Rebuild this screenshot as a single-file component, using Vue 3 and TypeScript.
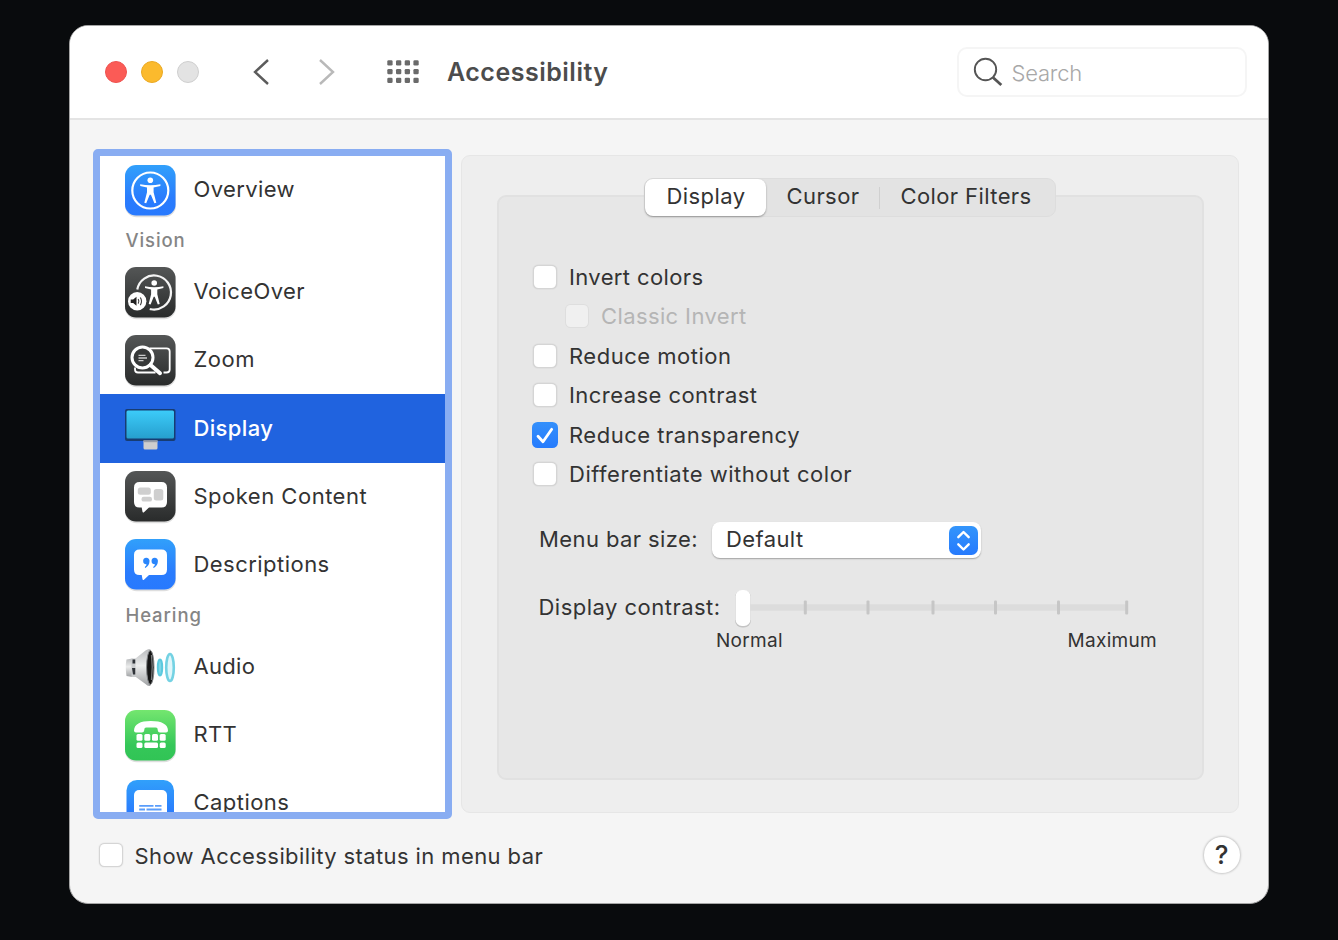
<script setup lang="ts">
import { ref } from 'vue'

type Entry = { kind: 'item' | 'header'; label: string; icon?: string; ls: number }
type Option = { label: string; checked: boolean; disabled?: boolean; ls: number }

const entries: Entry[] = [
  { kind: 'item', label: 'Overview', icon: 'overview', ls: 0.38 },
  { kind: 'header', label: 'Vision', ls: 0.9 },
  { kind: 'item', label: 'VoiceOver', icon: 'voiceover', ls: 0.4 },
  { kind: 'item', label: 'Zoom', icon: 'zoom', ls: 0.5 },
  { kind: 'item', label: 'Display', icon: 'display', ls: 0.35 },
  { kind: 'item', label: 'Spoken Content', icon: 'spoken', ls: 0.5 },
  { kind: 'item', label: 'Descriptions', icon: 'descriptions', ls: 0.46 },
  { kind: 'header', label: 'Hearing', ls: 0.9 },
  { kind: 'item', label: 'Audio', icon: 'audio', ls: 0.3 },
  { kind: 'item', label: 'RTT', icon: 'rtt', ls: 0.3 },
  { kind: 'item', label: 'Captions', icon: 'captions', ls: 0.46 },
]
const selected = ref('Display')

const options = ref<Option[]>([
  { label: 'Invert colors', checked: false, ls: 0.38 },
  { label: 'Classic Invert', checked: false, disabled: true, ls: 0.38 },
  { label: 'Reduce motion', checked: false, ls: 0.5 },
  { label: 'Increase contrast', checked: false, ls: 0.45 },
  { label: 'Reduce transparency', checked: true, ls: 0.51 },
  { label: 'Differentiate without color', checked: false, ls: 0.52 },
])

const ticks = [68.8, 131.5, 196.5, 259, 322, 390.2]
const dots = Array.from({ length: 12 }, (_, i) => ({ x: (i % 4) * 8.7, y: Math.floor(i / 4) * 8.7 }))

function toggle(o: Option) {
  if (!o.disabled) o.checked = !o.checked
}
</script>

<template>
  <div class="desktop">
    <main class="window">
      <header class="titlebar">
        <div class="lights"><i class="red"></i><i class="yellow"></i><i class="gray"></i></div>
        <svg class="nav" width="84" height="28" viewBox="0 0 84 28" fill="none" stroke-width="2.400">
          <path d="M16 2 3 14 16 26" stroke="#5c5c5c" />
          <path d="M68 2 81 14 68 26" stroke="#b9b9b9" />
        </svg>
        <svg class="grid" width="33" height="24" viewBox="0 0 33 24" fill="#6a6a6a">
          <rect v-for="(d, i) in dots" :key="i" :x="d.x + 0.3" :y="d.y + 0.3" width="5.300" height="5.300" rx="1.300" />
        </svg>
        <h1>Accessibility</h1>
        <div class="search">
          <svg width="30" height="30" viewBox="0 0 30 30" fill="none" stroke="#555">
            <circle cx="12.500" cy="12.500" r="10.700" stroke-width="1.900" />
            <path d="M20 20.500 28.300 28" stroke-width="2.800" />
          </svg>
          <span>Search</span>
        </div>
      </header>

      <div class="content">
        <nav class="sidebar">
          <div
            v-for="e in entries"
            :key="e.label"
            :class="[e.kind, { selected: e.label === selected }]"
            @click="e.kind === 'item' && (selected = e.label)"
          >
            <svg v-if="e.icon" class="icon" width="55" height="57" viewBox="-2 -2 55 57">
              <defs>
                <linearGradient :id="'g-' + e.icon" x1="0" y1="0" x2="0" y2="1">
                  <template v-if="['overview', 'descriptions', 'captions'].includes(e.icon)">
                    <stop offset="0" stop-color="#31a0fb" /><stop offset="0.650" stop-color="#2a7cfd" /><stop offset="1" stop-color="#2879fe" />
                  </template>
                  <template v-else-if="e.icon === 'rtt'">
                    <stop offset="0" stop-color="#74e66f" /><stop offset="0.700" stop-color="#35c759" /><stop offset="1" stop-color="#31c455" />
                  </template>
                  <template v-else-if="e.icon === 'display'">
                    <stop offset="0" stop-color="#3ccbf9" /><stop offset="1" stop-color="#269fce" />
                  </template>
                  <template v-else>
                    <stop offset="0" stop-color="#545656" /><stop offset="1" stop-color="#292b2b" />
                  </template>
                </linearGradient>
              </defs>
              <template v-if="!['display', 'audio', 'captions'].includes(e.icon)">
                <rect x="0" y="1.200" width="51" height="51" rx="11.500" fill="#000" opacity="0.130" />
                <rect width="50.500" height="50.500" rx="11" :fill="`url(#g-${e.icon})`" />
              </template>

              <g v-if="e.icon === 'overview'" fill="#fff">
                <circle cx="25.300" cy="25.500" r="18" fill="none" stroke="#fff" stroke-width="2.200" />
                <circle cx="25.300" cy="15.300" r="2.800" />
                <path d="M15.200 19.200Q25.300 21.500 35.400 19.200V20.900L28.600 22.500V27.300L31.300 37.700 29.400 38.300 25.900 29.800H24.700L21.200 38.300 19.300 37.700 22 27.300V22.500L15.200 20.900Z" />
              </g>

              <g v-else-if="e.icon === 'voiceover'" fill="#fff">
                <circle cx="29" cy="25.500" r="17" fill="none" stroke="#f4f4f4" stroke-width="2.200" stroke-dasharray="81 26" transform="rotate(190 29 25.500)" />
                <circle cx="29.200" cy="16" r="2.800" />
                <path d="M20 19.200Q29.200 21.500 38.400 19.200V21L32.300 22.500V27.300L34.700 37 32.800 37.600 29.700 29.800H28.700L25.600 37.600 23.700 37 26.100 27.300V22.500L20 21Z" />
                <circle cx="12.200" cy="34.300" r="9.200" />
                <path d="M5.700 32.600H8.200L11.500 29.800V38.800L8.200 36H5.700Z" fill="#222" />
                <path d="M13.200 32Q14.600 34.300 13.200 36.600M15.300 30.500Q17.800 34.300 15.300 38.100" fill="none" stroke="#444" stroke-width="1.200" />
              </g>

              <g v-else-if="e.icon === 'zoom'" fill="none" stroke="#fff">
                <path d="M24.500 13.300H41.500Q44.700 13.300 44.700 16.500V34.500Q44.700 37.500 41.500 37.500H38.500M30.500 37.500H13Q10 37.500 10 34.500V32.500" stroke-width="1.800" />
                <circle cx="17.500" cy="22.500" r="10.500" fill="#373939" stroke-width="3" />
                <path d="M25.500 30 35 38.200" stroke-width="4" stroke-linecap="round" />
                <path d="M13.500 20.300H20.500M13.500 23H22M13.500 25.600H18.500" stroke="#ccc" stroke-width="1.300" />
              </g>

              <g v-else-if="e.icon === 'display'">
                <rect x="0" y="6" width="50.500" height="32" rx="2" fill="#173c72" />
                <rect x="1.500" y="7.500" width="47.500" height="28" rx="1.500" fill="url(#g-display)" />
                <path d="M18.500 37.500H32.500V45Q32.500 46.500 31 46.500H20Q18.500 46.500 18.500 45Z" fill="#cecece" />
                <path d="M18.500 37.500H32.500V39.200H18.500Z" fill="#969da8" />
              </g>

              <g v-else-if="e.icon === 'spoken'">
                <path d="M14.500 11H36.500Q42 11 42 16.500V31Q42 36.500 36.500 36.500H24L18.700 41.400Q17.700 42 17.500 40.800L16.700 36.500H14.500Q9 36.500 9 31V16.500Q9 11 14.500 11Z" fill="#fff" />
                <g fill="#cfcfcf">
                  <rect x="12.800" y="16.500" width="13" height="7.300" rx="2.500" />
                  <rect x="16.500" y="25.800" width="10.500" height="4.800" rx="2.200" />
                  <rect x="28.800" y="18" width="9.500" height="11.500" rx="2.500" />
                </g>
              </g>

              <g v-else-if="e.icon === 'descriptions'">
                <path d="M14.500 10.500H36.500Q42 10.500 42 16V30.500Q42 36 36.500 36H24L18.700 40.900Q17.700 41.500 17.500 40.300L16.700 36H14.500Q9 36 9 30.500V16Q9 10.500 14.500 10.500Z" fill="#fff" />
                <g fill="#2a86fc">
                  <path d="M18.200 22.500A3.200 3.200 0 1 1 24.500 22.300Q24.500 26.500 20.400 29 19.500 28.500 20 27.700 21.700 26.400 21.500 25.200 18.300 25.300 18.200 22.500Z" />
                  <path d="M26.600 22.500A3.200 3.200 0 1 1 32.900 22.300Q32.900 26.500 28.800 29 27.900 28.500 28.400 27.700 30.100 26.400 29.900 25.200 26.700 25.300 26.600 22.500Z" />
                </g>
              </g>

              <g v-else-if="e.icon === 'audio'">
                <defs>
                  <linearGradient id="cone" x1="0" y1="0" x2="0" y2="1">
                    <stop offset="0" stop-color="#b9bbbd" /><stop offset="0.450" stop-color="#eceded" /><stop offset="1" stop-color="#a0a2a4" />
                  </linearGradient>
                </defs>
                <path d="M1.500 18.500Q0 25 1.500 35L7.500 36V17.500Z" fill="url(#cone)" />
                <path d="M6.500 17.500H11.500V36H6.500Z" fill="#c9cbcd" />
                <path d="M7.500 18.500H10.500V22.500H7.500ZM7 27H10.500V33.500H8Z" fill="#2f3338" />
                <path d="M10.500 17.500 20.500 9.500Q24 7 25.500 8.500V44.500Q23.500 46 20.500 43L10.500 35.800Z" fill="url(#cone)" />
                <ellipse cx="25.300" cy="26.500" rx="3.700" ry="17" fill="#161616" stroke="#85888a" stroke-width="1" />
                <path d="M26.500 14Q28 26 26.500 39" fill="none" stroke="#77797b" stroke-width="1.300" />
                <ellipse cx="35" cy="26.500" rx="2.200" ry="8" fill="#7fd6e6" stroke="#5cc9de" stroke-width="2" />
                <ellipse cx="45" cy="26.500" rx="3.800" ry="13.500" fill="#e0f6fa" stroke="#74d2e3" stroke-width="2.600" />
              </g>

              <g v-else-if="e.icon === 'rtt'" fill="#fff">
                <path d="M9 20.500Q9.500 11 25.800 11 42.500 11 43 20.500 43 22.500 41 22.500H35Q33 22.500 32.800 20.500L32.500 18.500Q32 17.500 30.500 17.500H21.500Q20 17.500 19.500 18.500L19.200 20.500Q19 22.500 17 22.500H11Q9 22.500 9 20.500Z" />
                <rect x="11.500" y="24" width="6" height="6.800" rx="1.500" />
                <rect x="19.300" y="24" width="6" height="6.800" rx="1.500" />
                <rect x="27" y="24" width="6" height="6.800" rx="1.500" />
                <rect x="34.700" y="24" width="6" height="6.800" rx="1.500" />
                <rect x="11.500" y="32.500" width="6" height="5.500" rx="1.500" />
                <rect x="19.300" y="32.500" width="13.700" height="5.500" rx="1.500" />
                <rect x="34.700" y="32.500" width="6" height="5.500" rx="1.500" />
              </g>

              <g v-else-if="e.icon === 'captions'">
                <rect x="1.500" y="2" width="47.500" height="50" rx="10.500" fill="url(#g-captions)" />
                <rect x="9" y="12" width="33" height="26" rx="5" fill="#fff" />
                <path d="M14.200 27.800H28.500M30 27.800H36.500M14.200 31.500H20M21.500 31.500H36.500" stroke="#5a9dfb" stroke-width="1.800" />
              </g>
            </svg>
            <span :style="{ letterSpacing: e.ls + 'px' }">{{ e.label }}</span>
          </div>
        </nav>

        <section class="panel">
          <div class="group">
            <div class="segments">
              <span class="seg active">Display</span>
              <span class="seg cursor">Cursor</span>
              <i class="separator"></i>
              <span class="seg filters">Color Filters</span>
            </div>

            <div class="options">
              <label v-for="o in options" :key="o.label" class="option" :class="{ disabled: o.disabled }" @click="toggle(o)">
                <i class="box" :class="{ on: o.checked }">
                  <svg v-if="o.checked" width="26" height="26" viewBox="0 0 26 26" fill="none" stroke="#fff" stroke-width="2.800" stroke-linecap="round" stroke-linejoin="round">
                    <path d="M6 14.300 11 19.800 19.700 7.300" />
                  </svg>
                </i>
                <span :style="{ letterSpacing: o.ls + 'px' }">{{ o.label }}</span>
              </label>
            </div>

            <div class="menu-row">
              <span class="menu-label">Menu bar size:</span>
              <div class="popup">
                <span>Default</span>
                <svg width="29" height="29" viewBox="0 0 29 29" fill="none" stroke="#fff" stroke-width="2.400" stroke-linecap="round" stroke-linejoin="round">
                  <defs>
                    <linearGradient id="pop" x1="0" y1="0" x2="0" y2="1">
                      <stop offset="0" stop-color="#3395fb" /><stop offset="1" stop-color="#267afd" />
                    </linearGradient>
                  </defs>
                  <rect width="29" height="29" rx="6.500" fill="url(#pop)" stroke="none" />
                  <path d="M9.300 11.200 14.500 6 19.700 11.200M9.300 18.300 14.500 23.500 19.700 18.300" />
                </svg>
              </div>
            </div>

            <div class="slider-row">
              <span class="slider-label">Display contrast:</span>
              <svg class="slider" width="400" height="44" viewBox="-2 -2 400 44">
                <rect x="7" y="14.300" width="385" height="6.500" fill="#dcdcdc" />
                <rect v-for="t in ticks" :key="t" :x="t" y="10.500" width="3" height="14" rx="1" fill="#c6c6c6" />
                <rect x="0" y="0.500" width="16" height="37" rx="7" fill="#000" opacity="0.150" />
                <rect x="0.500" y="0" width="15" height="36" rx="6.500" fill="#fff" />
              </svg>
            </div>
            <div class="scale"><span>Normal</span><span>Maximum</span></div>
          </div>
        </section>
      </div>

      <footer>
        <i class="box"></i>
        <span class="status">Show Accessibility status in menu bar</span>
        <button class="help">?</button>
      </footer>
    </main>
  </div>
</template>

<style>
body {
  background: #090b0d;
}
</style>

<style scoped>
* {
  box-sizing: border-box;
}
.desktop {
  width: 1338px;
  height: 940px;
  padding: 25px 69px 36px;
  background: #090b0d;
  font-family: Inter, "Liberation Sans", sans-serif;
  font-size: 22px;
  line-height: 30px;
  letter-spacing: 0.400px;
  color: #333;
  white-space: nowrap;
  overflow: hidden;
}
.window {
  height: 879px;
  border-radius: 19px;
  background: #f5f5f5;
  overflow: hidden;
  border: 1px solid #a5a5a5;
  display: flex;
  flex-direction: column;
}
.titlebar {
  height: 94px;
  flex: none;
  background: #fff;
  border-bottom: 2px solid #e4e4e4;
  display: flex;
  align-items: center;
  padding: 0 21.500px 0 35px;
}
.lights {
  display: flex;
  gap: 14px;
}
.lights i {
  width: 22px;
  height: 22px;
  border-radius: 50%;
  border: 1px solid;
}
.red {
  background: #fb5b56;
  border-color: #ee5350 !important;
}
.yellow {
  background: #fbba2d;
  border-color: #eba922 !important;
}
.gray {
  background: #e3e3e3;
  border-color: #cfcfcf !important;
}
.nav {
  margin-left: 53px;
}
.grid {
  margin-left: 51px;
}
h1 {
  margin: 0 0 0 27px;
  font-size: 25px;
  font-weight: 600;
  color: #4c4c4c;
  letter-spacing: 0.500px;
}
.search {
  margin-left: auto;
  width: 290px;
  height: 50px;
  border: 2px solid #f5f5f5;
  border-radius: 10px;
  display: flex;
  align-items: center;
  gap: 8.500px;
  padding-left: 14.500px;
  color: #a8a8a8;
  font-weight: 300;
  letter-spacing: -0.200px;
}
.search span {
  padding-top: 2px;
}
.content {
  display: flex;
  gap: 9px;
  padding: 29px 28px 0 23px;
}
.sidebar {
  width: 359px;
  height: 670px;
  flex: none;
  border: 7px solid #89adf2;
  border-radius: 5px;
  background: #fff;
  overflow: hidden;
}
.item {
  height: 68.100px;
  display: flex;
  align-items: center;
  padding: 0 0 2px 23px;
}
.item span {
  margin-left: 15.500px;
}
.icon {
  flex: none;
  margin-top: 4px;
}
.selected {
  background: #2063df;
  color: #fff;
  font-weight: 500;
}
.header {
  height: 34.200px;
  padding-left: 25.500px;
  font-size: 18.500px;
  line-height: 33px;
  font-weight: 500;
  color: #858585;
}
.panel {
  width: 778px;
  height: 658px;
  flex: none;
  margin-top: 6px;
  border: 1px solid #e6e6e6;
  border-radius: 9px;
  background: #eeeeee;
  padding: 39px 34px 0 35px;
}
.group {
  height: 585px;
  border: 2px solid #e1e1e1;
  border-radius: 9px;
  background: #e7e7e7;
}
.segments {
  width: 412px;
  height: 39px;
  margin: -19px 0 0 145px;
  border: 1px solid #dddddd;
  border-radius: 9px;
  background: #e3e3e3;
  display: flex;
  align-items: center;
}
.seg {
  height: 37px;
  line-height: 35px;
  text-align: center;
}
.active {
  width: 121px;
  padding-left: 1px;
  border-radius: 8px;
  background: #fff;
  box-shadow: 0 1px 2px rgba(0, 0, 0, 0.35);
}
.cursor {
  width: 113px;
  padding-left: 1px;
}
.separator {
  width: 1px;
  height: 22px;
  background: #d0d0d0;
}
.filters {
  width: 172px;
}
.options {
  margin: 40px 0 0 34px;
}
.option {
  height: 39.500px;
  display: flex;
  align-items: center;
  gap: 12px;
}
.box {
  width: 22px;
  height: 22px;
  margin: 0 1px;
  flex: none;
  border-radius: 4.500px;
  background: #fff;
  box-shadow: 0 0 0 1px #d5d5d5, 0 0 1.500px 1px rgba(0, 0, 0, 0.14);
  display: block;
}
.box.on {
  width: 26px;
  height: 26px;
  margin: 0 -1px;
  border-radius: 5.500px;
  background: linear-gradient(#3490fb, #267bfd);
  box-shadow: none;
}
.disabled {
  margin-left: 32px;
  color: #b5b5b5;
}
.disabled .box {
  background: #f0f0f0;
  box-shadow: 0 0 0 1px #dedede;
}
.menu-row {
  display: flex;
  align-items: center;
  margin: 28px 0 0 40px;
}
.menu-label {
  width: 173px;
  padding-bottom: 2px;
}
.popup {
  width: 269px;
  height: 36px;
  border-radius: 8px;
  background: #fff;
  box-shadow: 0 1px 1.500px rgba(0, 0, 0, 0.3);
  display: flex;
  align-items: center;
  justify-content: space-between;
  padding: 0 3px 0 14px;
}
.popup span {
  padding-bottom: 2px;
}
.slider-row {
  display: flex;
  align-items: center;
  margin: 28px 0 0 39.500px;
}
.slider-label {
  width: 194.500px;
  padding-bottom: 4px;
  letter-spacing: 0.480px;
}
.slider {
  margin-top: 2px;
}
.scale {
  display: flex;
  justify-content: space-between;
  width: 441px;
  margin: -6px 0 0 217px;
  font-size: 19px;
  letter-spacing: 0.300px;
}
footer {
  display: flex;
  align-items: center;
  height: 36px;
  margin-top: 18px;
  padding: 0 28.500px 0 29px;
}
.status {
  margin-left: 11.500px;
  padding-top: 2px;
}
.help {
  margin-left: auto;
  width: 36px;
  height: 36px;
  padding: 0;
  border: 0;
  border-radius: 50%;
  background: #fff;
  box-shadow: 0 0 2px 1px rgba(0, 0, 0, 0.18);
  font: 500 26px/36px Inter, sans-serif;
  color: #333;
}
</style>
